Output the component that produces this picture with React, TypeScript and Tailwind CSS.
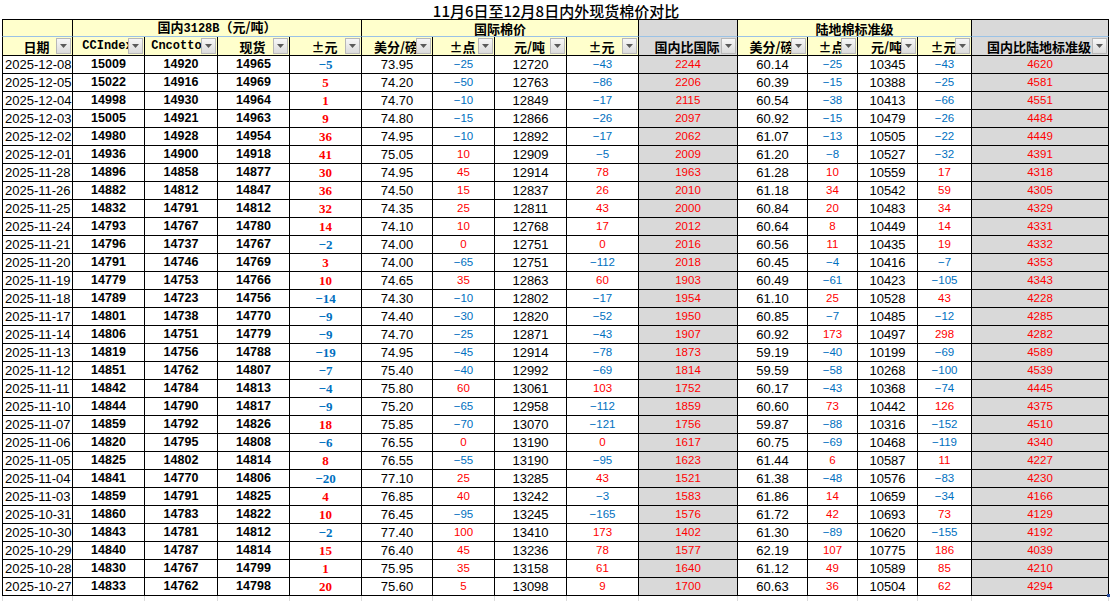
import React from 'react'

// 列宽（像素），与截图中的表格列对应
const cols =
  'grid-cols-[71px_72px_73px_72px_72px_71px_62px_72px_72px_99px_70px_50px_60px_54px_137px]'

type Row = [string, number, number, number, number, string, number, number, number, number, string, number, number, number, number]

const rows: Row[] = [
  ['2025-12-08', 15009, 14920, 14965, -5, '73.95', -25, 12720, -43, 2244, '60.14', -25, 10345, -43, 4620],
  ['2025-12-05', 15022, 14916, 14969, 5, '74.20', -50, 12763, -86, 2206, '60.39', -15, 10388, -25, 4581],
  ['2025-12-04', 14998, 14930, 14964, 1, '74.70', -10, 12849, -17, 2115, '60.54', -38, 10413, -66, 4551],
  ['2025-12-03', 15005, 14921, 14963, 9, '74.80', -15, 12866, -26, 2097, '60.92', -15, 10479, -26, 4484],
  ['2025-12-02', 14980, 14928, 14954, 36, '74.95', -10, 12892, -17, 2062, '61.07', -13, 10505, -22, 4449],
  ['2025-12-01', 14936, 14900, 14918, 41, '75.05', 10, 12909, -5, 2009, '61.20', -8, 10527, -32, 4391],
  ['2025-11-28', 14896, 14858, 14877, 30, '74.95', 45, 12914, 78, 1963, '61.28', 10, 10559, 17, 4318],
  ['2025-11-26', 14882, 14812, 14847, 36, '74.50', 15, 12837, 26, 2010, '61.18', 34, 10542, 59, 4305],
  ['2025-11-25', 14832, 14791, 14812, 32, '74.35', 25, 12811, 43, 2000, '60.84', 20, 10483, 34, 4329],
  ['2025-11-24', 14793, 14767, 14780, 14, '74.10', 10, 12768, 17, 2012, '60.64', 8, 10449, 14, 4331],
  ['2025-11-21', 14796, 14737, 14767, -2, '74.00', 0, 12751, 0, 2016, '60.56', 11, 10435, 19, 4332],
  ['2025-11-20', 14791, 14746, 14769, 3, '74.00', -65, 12751, -112, 2018, '60.45', -4, 10416, -7, 4353],
  ['2025-11-19', 14779, 14753, 14766, 10, '74.65', 35, 12863, 60, 1903, '60.49', -61, 10423, -105, 4343],
  ['2025-11-18', 14789, 14723, 14756, -14, '74.30', -10, 12802, -17, 1954, '61.10', 25, 10528, 43, 4228],
  ['2025-11-17', 14801, 14738, 14770, -9, '74.40', -30, 12820, -52, 1950, '60.85', -7, 10485, -12, 4285],
  ['2025-11-14', 14806, 14751, 14779, -9, '74.70', -25, 12871, -43, 1907, '60.92', 173, 10497, 298, 4282],
  ['2025-11-13', 14819, 14756, 14788, -19, '74.95', -45, 12914, -78, 1873, '59.19', -40, 10199, -69, 4589],
  ['2025-11-12', 14851, 14762, 14807, -7, '75.40', -40, 12992, -69, 1814, '59.59', -58, 10268, -100, 4539],
  ['2025-11-11', 14842, 14784, 14813, -4, '75.80', 60, 13061, 103, 1752, '60.17', -43, 10368, -74, 4445],
  ['2025-11-10', 14844, 14790, 14817, -9, '75.20', -65, 12958, -112, 1859, '60.60', 73, 10442, 126, 4375],
  ['2025-11-07', 14859, 14792, 14826, 18, '75.85', -70, 13070, -121, 1756, '59.87', -88, 10316, -152, 4510],
  ['2025-11-06', 14820, 14795, 14808, -6, '76.55', 0, 13190, 0, 1617, '60.75', -69, 10468, -119, 4340],
  ['2025-11-05', 14825, 14802, 14814, 8, '76.55', -55, 13190, -95, 1623, '61.44', 6, 10587, 11, 4227],
  ['2025-11-04', 14841, 14770, 14806, -20, '77.10', 25, 13285, 43, 1521, '61.38', -48, 10576, -83, 4230],
  ['2025-11-03', 14859, 14791, 14825, 4, '76.85', 40, 13242, -3, 1583, '61.86', 14, 10659, -34, 4166],
  ['2025-10-31', 14860, 14783, 14822, 10, '76.45', -95, 13245, -165, 1576, '61.72', 42, 10693, 73, 4129],
  ['2025-10-30', 14843, 14781, 14812, -2, '77.40', 100, 13410, 173, 1402, '61.30', -89, 10620, -155, 4192],
  ['2025-10-29', 14840, 14787, 14814, 15, '76.40', 45, 13236, 78, 1577, '62.19', 107, 10775, 186, 4039],
  ['2025-10-28', 14830, 14767, 14799, 1, '75.95', 35, 13158, 61, 1640, '61.12', 49, 10589, 85, 4210],
  ['2025-10-27', 14833, 14762, 14798, 20, '75.60', 5, 13098, 9, 1700, '60.63', 36, 10504, 62, 4294],
]

const fmt = (n: number) => (n < 0 ? `\u2212${-n}` : `${n}`)
const signColor = (n: number) => (n < 0 ? 'text-[#0070c0]' : 'text-[#ff0000]')

const cjk = "font-['Noto_Sans_CJK_SC',sans-serif]"
const sans = "font-['Liberation_Sans',Arial,sans-serif]"

const FilterButton = () => (
  <span className="absolute right-[1px] top-[1px] w-[15px] h-[16px] border border-[#b8b8b8] bg-gradient-to-b from-[#f7f7f7] to-[#dcdcdc] flex items-center justify-center">
    <svg width="7" height="4" viewBox="0 0 7 4">
      <path d="M0 0h7L3.5 4z" fill="#5a5a5a" />
    </svg>
  </span>
)

const headers: { label: string; mono?: boolean; gray?: boolean }[] = [
  { label: '日期' },
  { label: 'CCIndex', mono: true },
  { label: 'Cncotton', mono: true },
  { label: '现货' },
  { label: '±元' },
  { label: '美分/磅' },
  { label: '±点' },
  { label: '元/吨' },
  { label: '±元' },
  { label: '国内比国际', gray: true },
  { label: '美分/磅' },
  { label: '±点' },
  { label: '元/吨' },
  { label: '±元' },
  { label: '国内比陆地标准级', gray: true },
]

const cellBase = 'border-r border-b border-black flex items-center justify-center overflow-hidden whitespace-nowrap'
const groupCell = 'h-[18px] border-t border-r border-black border-b border-b-[#9bc2e6]'

const DataRow = ({ r, last }: { r: Row; last: boolean }) => {
  const [date, cci, cnc, spot, d1, usc, p1, rmb, d2, diff1, usc2, p2, rmb2, d3, diff2] = r
  return (
    <>
      <div className={`${cellBase} h-[18px] border-l justify-start pl-[2px] text-[13px] text-black ${sans}`}>{date}</div>
      <div className={`${cellBase} h-[18px] text-[12.5px] font-bold text-black ${sans}`}>{cci}</div>
      <div className={`${cellBase} h-[18px] text-[12.5px] font-bold text-black ${sans}`}>{cnc}</div>
      <div className={`${cellBase} h-[18px] text-[12.5px] font-bold text-black ${sans}`}>{spot}</div>
      <div className={`${cellBase} h-[18px] text-[13px] font-bold font-['Liberation_Serif',serif] ${signColor(d1)}`}>{fmt(d1)}</div>
      <div className={`${cellBase} h-[18px] text-[13px] text-black ${sans}`}>{usc}</div>
      <div className={`${cellBase} h-[18px] text-[11.5px] ${sans} ${signColor(p1)}`}>{fmt(p1)}</div>
      <div className={`${cellBase} h-[18px] text-[13px] text-black ${sans}`}>{rmb}</div>
      <div className={`${cellBase} h-[18px] text-[11.5px] ${sans} ${signColor(d2)}`}>{fmt(d2)}</div>
      <div className={`${cellBase} h-[18px] bg-[#d9d9d9] text-[11.5px] text-[#ff0000] ${sans}`}>{diff1}</div>
      <div className={`${cellBase} h-[18px] text-[13px] text-black ${sans}`}>{usc2}</div>
      <div className={`${cellBase} h-[18px] text-[11.5px] ${sans} ${signColor(p2)}`}>{fmt(p2)}</div>
      <div className={`${cellBase} h-[18px] text-[13px] text-black ${sans}`}>{rmb2}</div>
      <div className={`${cellBase} h-[18px] text-[11.5px] ${sans} ${signColor(d3)}`}>{fmt(d3)}</div>
      <div className={`${cellBase} relative overflow-visible h-[18px] bg-[#d9d9d9] text-[11.5px] text-[#ff0000] ${sans}`}>
        {diff2}
        {last && <span className="absolute right-[-2px] bottom-[-2px] w-[3px] h-[3px] bg-[#2b4f9e]" />}
      </div>
    </>
  )
}

export default function App() {
  return (
    <div className="w-[1113px] h-[601px] bg-white overflow-hidden">
      {/* 标题 */}
      <div className={`ml-[2px] w-[1108px] h-[19px] flex items-center justify-center pt-[1px] text-[15px] font-medium text-black leading-[15px] ${cjk}`}>
        11月6日至12月8日内外现货棉价对比
      </div>

      <div className={`ml-[2px] grid ${cols}`}>
        {/* 分组表头 */}
        <div className={`${groupCell} border-l bg-[#ffffcc]`} />
        <div className={`col-span-4 ${groupCell} bg-[#ffffcc] flex items-center justify-center text-[13px] font-bold text-black ${cjk}`}>
          <span className="leading-[16px]">
            国内<span className="font-['Liberation_Mono',monospace] text-[12px]">3128B</span>（元/吨）
          </span>
        </div>
        <div className={`col-span-4 ${groupCell} bg-[#ffffcc] flex items-center justify-center leading-none text-[13px] font-bold text-black ${cjk}`}>
          国际棉价
        </div>
        <div className={`${groupCell} bg-[#d9d9d9]`} />
        <div className={`col-span-4 ${groupCell} bg-[#ffffcc] flex items-center justify-center leading-none text-[13px] font-bold text-black ${cjk}`}>
          陆地棉标准级
        </div>
        <div className={`${groupCell} bg-[#d9d9d9]`} />

        {/* 列标题 */}
        {headers.map((h, i) => (
          <div
            key={i}
            className={`relative h-[19px] leading-none ${cellBase} ${i === 0 ? 'border-l' : ''} ${h.gray ? 'bg-[#d9d9d9]' : 'bg-[#ffffcc]'} text-black font-bold ${
              h.mono ? "font-['Liberation_Mono',monospace] text-[12px]" : `${cjk} text-[13px]`
            }`}
          >
            <span className="pr-[2px]">{h.label}</span>
            <FilterButton />
          </div>
        ))}

        {/* 数据行 */}
        {rows.map((r, i) => (
          <DataRow key={r[0]} r={r} last={i === rows.length - 1} />
        ))}

        {/* 表格下方的网格线 */}
        {headers.map((_, i) => (
          <div key={`g${i}`} className={`h-[5px] border-r border-[#dadada] ${i === 0 ? 'border-l' : ''}`} />
        ))}
      </div>
    </div>
  )
}
